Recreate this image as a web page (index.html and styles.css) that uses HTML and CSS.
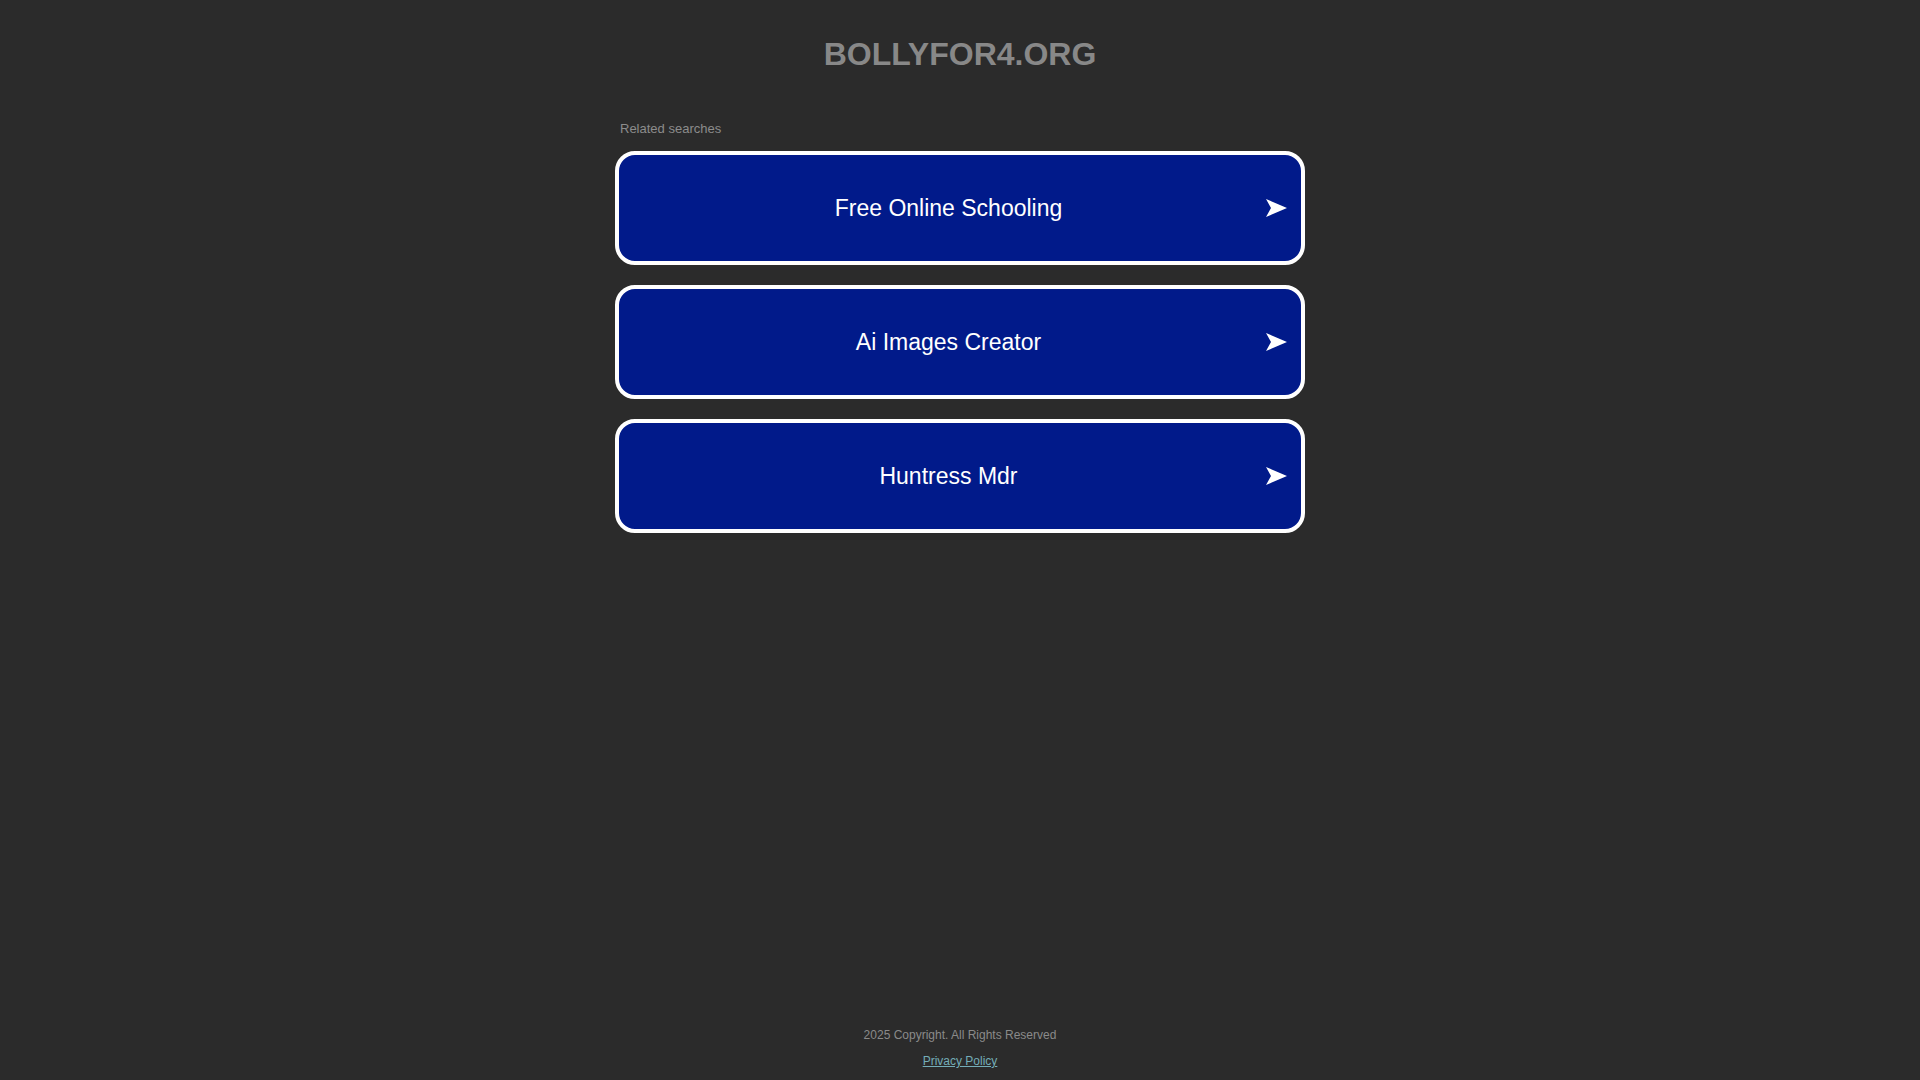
FILE: index.html
```html
<!DOCTYPE html>
<html lang="en">
<head>
<meta charset="utf-8">
<title>bollyfor4.org</title>
<link rel="stylesheet" href="styles.css">
</head>
<body>
<div class="page">
  <main class="main">
    <h1 class="domain">BOLLYFOR4.ORG</h1>
    <section class="related">
      <div class="related-title">Related searches</div>
      <ul class="links">
        <li><a class="link" href="#"><span class="link-text">Free Online Schooling</span><svg class="arrow" viewBox="0 0 21 18" width="21" height="18" aria-hidden="true"><path d="M0 0 L21 9 L0 18 L5 9 Z" fill="#ffffff"/></svg></a></li>
        <li><a class="link" href="#"><span class="link-text">Ai Images Creator</span><svg class="arrow" viewBox="0 0 21 18" width="21" height="18" aria-hidden="true"><path d="M0 0 L21 9 L0 18 L5 9 Z" fill="#ffffff"/></svg></a></li>
        <li><a class="link" href="#"><span class="link-text">Huntress Mdr</span><svg class="arrow" viewBox="0 0 21 18" width="21" height="18" aria-hidden="true"><path d="M0 0 L21 9 L0 18 L5 9 Z" fill="#ffffff"/></svg></a></li>
      </ul>
    </section>
  </main>
  <footer class="footer">
    <div class="copyright">2025 Copyright. All Rights Reserved</div>
    <a class="privacy" href="#">Privacy Policy</a>
  </footer>
</div>
</body>
</html>
```

FILE: styles.css
```css
html, body {
  margin: 0;
  padding: 0;
  height: 100%;
}
body {
  background: #2b2b2b;
  font-family: "Liberation Sans", Arial, sans-serif;
  color: #888888;
}
.page {
  min-height: 100vh;
  display: flex;
  flex-direction: column;
  box-sizing: border-box;
}
.main {
  flex: 1;
  display: flex;
  flex-direction: column;
  align-items: center;
}
.domain {
  margin: 36px 0 0;
  font-size: 32px;
  line-height: 36px;
  font-weight: bold;
  color: #888888;
  text-align: center;
}
.related {
  width: 690px;
  margin-top: 49px;
}
.related-title {
  font-size: 13px;
  line-height: 15px;
  color: #8c8c8c;
  padding-left: 5px;
}
.links {
  list-style: none;
  margin: 15px 0 0;
  padding: 0;
  display: flex;
  flex-direction: column;
  gap: 20px;
}
.link {
  box-sizing: border-box;
  height: 114px;
  display: flex;
  align-items: center;
  padding: 0 14px 0 12px;
  background: #011a8a;
  border: 4px solid #ffffff;
  border-radius: 20px;
  text-decoration: none;
  color: #ffffff;
}
.link-text {
  flex: 1;
  text-align: center;
  font-size: 23px;
}
.arrow {
  display: block;
  flex: none;
}
.footer {
  display: flex;
  flex-direction: column;
  align-items: center;
  padding-bottom: 12px;
  font-size: 12px;
  line-height: 14px;
}
.copyright {
  color: #8a8a8a;
}
.privacy {
  margin-top: 12px;
  color: #74adb8;
  text-decoration: underline;
}
```
